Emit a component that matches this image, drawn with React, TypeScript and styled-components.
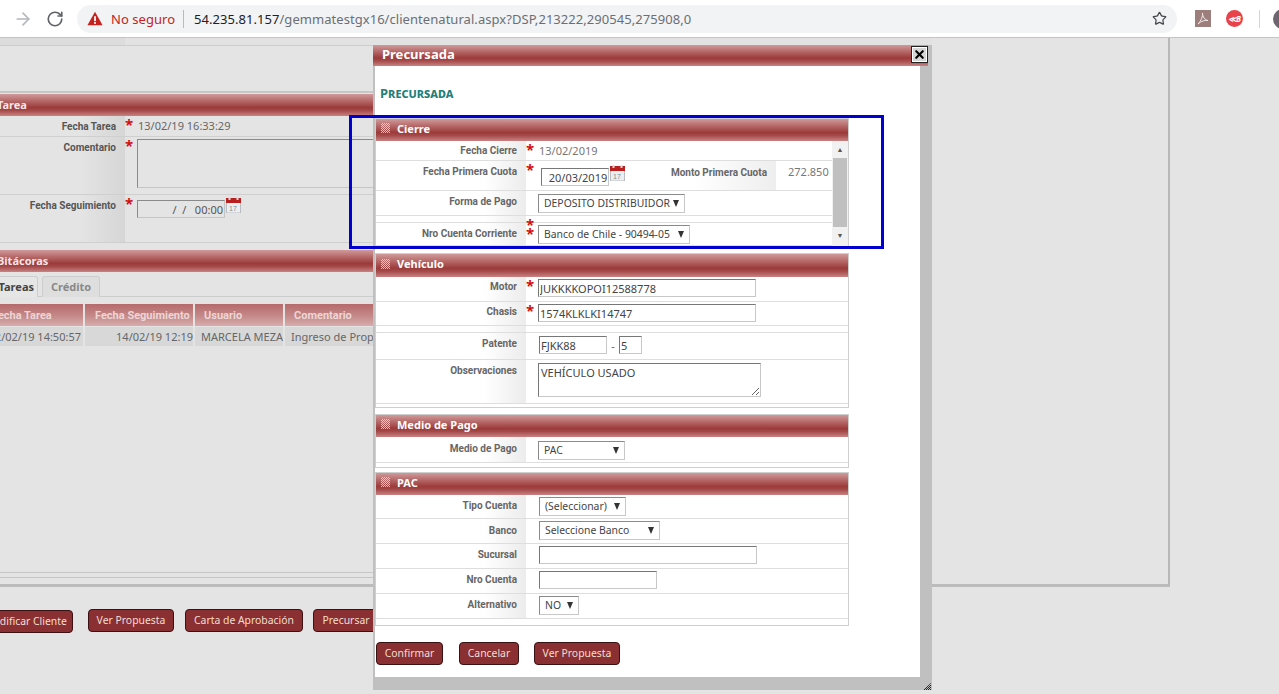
import React from "react";
import styled, { createGlobalStyle } from "styled-components";
import { ArrowRight, RotateCw, Star, X } from "lucide-react";

const GlobalStyle = createGlobalStyle`
  * { box-sizing: border-box; }
  html, body { margin: 0; height: 100%; overflow: hidden; background: #e4e4e4; }
  body { font-family: "Noto Sans", "Open Sans", sans-serif; font-size: 11px; color: #555; }
`;

const barGradient = "linear-gradient(#d09a9a 0%, #b76a6a 30%, #9c3a3a 62%, #a54a4a 75%, #c98282 100%)";

/* browser toolbar */
const Toolbar = styled.div`
  height: 38px;
  background: #fff;
  border-bottom: 1px solid #c4c4c4;
  display: flex;
  align-items: center;
  padding: 0 0 0 13px;
  overflow: hidden;
`;
const NavBack = styled(ArrowRight)`
  flex: none;
  color: #b4b7bb;
  margin-right: 13px;
`;
const NavReload = styled(RotateCw)`
  flex: none;
  color: #5f6368;
  margin-right: 13px;
`;
const Omnibox = styled.div`
  flex: none;
  width: 1100px;
  height: 28px;
  border-radius: 14px;
  background: #f1f3f4;
  display: flex;
  align-items: center;
  padding: 0 10px;
  font-size: 13px;
  letter-spacing: 0.05px;
  white-space: nowrap;
`;
const NotSecure = styled.span`
  width: 73px;
  height: 18px;
  margin: 0 10px 0 8px;
  border-right: 1px solid #b8babd;
  color: #c5221f;
  line-height: 18px;
`;
const UrlHost = styled.span`
  color: #202124;
`;
const UrlRest = styled.span`
  color: #6b6f74;
  flex: 1;
`;
const StarIcon = styled(Star)`
  color: #45484c;
`;
const Extensions = styled.div`
  flex: none;
  display: flex;
  align-items: center;
  margin-left: 18px;
`;
const PdfBadge = styled.svg`
  margin-right: 15px;
`;
const RedBadge = styled.span`
  width: 17px;
  height: 17px;
  border-radius: 50%;
  background: #e8424a;
  color: #fff;
  font-size: 8px;
  font-weight: 700;
  font-style: italic;
  text-align: center;
  line-height: 17px;
  margin-right: 16px;
`;
const ToolbarSep = styled.span`
  width: 1px;
  height: 18px;
  background: #d4d4d4;
  margin-right: 13px;
`;
const Avatar = styled.span`
  flex: none;
  width: 20px;
  height: 20px;
  border-radius: 50%;
  background: #6d6470;
`;

/* page behind the dialog */
const Page = styled.div`
  position: relative;
  height: 656px;
  overflow: hidden;
  background: #e4e4e4;
`;
const BackFrame = styled.div`
  margin-left: -25px;
  width: 1195px;
  height: 549px;
  border-right: 2px solid #b8b8b8;
  border-bottom: 3px solid #bcbcbc;
`;
const BackColumn = styled.div`
  width: 957px;
`;
const TopStrip = styled.div`
  height: 8px;
  border-bottom: 1px solid #cdcdcd;
  background: linear-gradient(90deg, #dcdcdc 0 150px, #e2e2e2 150px);
`;
const TopSpacer = styled.div`
  height: 47px;
  border-bottom: 2px solid #c6c6c6;
`;
const BackBar = styled.div`
  height: 22px;
  margin-top: 1px;
  padding-left: 22px;
  background: ${barGradient};
  color: #f6e6e6;
  font-weight: 700;
  font-size: 11px;
  line-height: 21px;
`;
const BackRow = styled.div<{ $h: number }>`
  height: ${(p) => p.$h}px;
  display: grid;
  grid-template-columns: 150px 1fr;
  border-bottom: 1px solid #cfcfcf;
`;
const BackLabel = styled.div`
  background: linear-gradient(90deg, #e4e4e4 70%, #d6d6d6);
  text-align: right;
  padding: 5px 9px 0 0;
  font-family: Roboto, sans-serif;
  font-weight: 700;
  font-size: 10px;
  color: #555;
`;
const BackValue = styled.div`
  display: flex;
  padding-top: 2px;
  color: #666;
`;
const Req = styled.span<{ $top?: number }>`
  flex: none;
  width: 12px;
  color: #d01010;
  font-size: 15px;
  font-weight: 700;
  line-height: 12px;
  margin-top: ${(p) => p.$top ?? 0}px;
`;
const PlainText = styled.span`
  margin-left: 1px;
`;
const BackTextarea = styled.div`
  width: 600px;
  height: 49px;
  border: 1px solid #8a8a8a;
  border-right-color: #c4c4c4;
  border-bottom-color: #c4c4c4;
`;
const BackDate = styled.div`
  width: 88px;
  height: 18px;
  margin-top: 3px;
  border: 1px solid #8a8a8a;
  border-right-color: #c4c4c4;
  border-bottom-color: #c4c4c4;
  text-align: right;
  line-height: 17px;
  padding-right: 1px;
  color: #555;
  white-space: pre;
`;
const BackGap = styled.div`
  height: 6px;
`;
const Tabs = styled.div`
  height: 25px;
  display: flex;
  gap: 4px;
  padding: 4px 0 0 3px;
  border-bottom: 1px solid #cdcdcd;
`;
const Tab = styled.div<{ $active?: boolean }>`
  width: ${(p) => (p.$active ? 60 : 58)}px;
  height: 21px;
  border: 1px solid #cdcdcd;
  border-bottom: 0;
  border-radius: 3px 3px 0 0;
  text-align: ${(p) => (p.$active ? "right" : "center")};
  padding-right: ${(p) => (p.$active ? 3 : 0)}px;
  font-weight: 700;
  line-height: 19px;
  color: ${(p) => (p.$active ? "#444" : "#888")};
  background: ${(p) => (p.$active ? "#e6e6e6" : "#dedede")};
`;
const LogGrid = styled.div`
  display: grid;
  grid-template-columns: 108px 108px 88px 1fr;
  column-gap: 2px;
  row-gap: 1px;
  margin-top: 7px;
`;
const LogHead = styled.div<{ $pad: number }>`
  height: 22px;
  padding-left: ${(p) => p.$pad}px;
  background: linear-gradient(#b56a6a, #c58a8a 55%, #d6adad);
  color: #edd6d6;
  font-family: Roboto, sans-serif;
  font-weight: 700;
  font-size: 11px;
  line-height: 23px;
  white-space: nowrap;
`;
const LogCell = styled.div<{ $end?: number; $pad?: number }>`
  height: 19px;
  background: #d8d8d8;
  color: #666;
  line-height: 20px;
  white-space: nowrap;
  text-align: ${(p) => (p.$end !== undefined ? "right" : "left")};
  padding: 0 ${(p) => p.$end ?? 0}px 0 ${(p) => p.$pad ?? 0}px;
`;
const BackLines = styled.div`
  margin-top: 226px;
  height: 6px;
  border-top: 1px solid #c6c6c6;
  border-bottom: 1px solid #c6c6c6;
`;
const BackActions = styled.div`
  display: flex;
  align-items: flex-start;
  padding: 22px 0 0 3px;
`;
const Action = styled.button<{ $w: number; $left?: number; $top?: number }>`
  flex: none;
  width: ${(p) => p.$w}px;
  height: 23px;
  margin-left: ${(p) => p.$left ?? 0}px;
  margin-top: ${(p) => p.$top ?? 0}px;
  padding: 0;
  background: #8a3033;
  border: 1px solid #3a1214;
  border-radius: 4px;
  color: #f3dfd0;
  font: 10.4px "Noto Sans", sans-serif;
  line-height: 19px;
`;

/* dialog */
const Modal = styled.div`
  position: absolute;
  left: 373px;
  top: 7px;
  width: 559px;
  height: 645px;
  background: #c0c0c0;
`;
const ModalBar = styled.div`
  width: 555px;
  height: 21px;
  padding-left: 9px;
  background: ${barGradient};
  color: #fff;
  font-size: 13px;
  font-weight: 700;
  line-height: 18px;
`;
const CloseBox = styled.div`
  position: absolute;
  left: 538px;
  top: 1px;
  width: 17px;
  height: 17px;
  display: flex;
  align-items: center;
  justify-content: center;
  background: #d6d6d6;
  border: 1px solid #222;
  outline: 1px solid #fff;
  outline-offset: -2px;
  color: #000;
`;
const ModalBody = styled.div`
  width: 545px;
  height: 611px;
  margin-left: 2px;
  background: #fff;
`;
const Heading = styled.div`
  height: 52px;
  padding: 18px 0 0 5px;
  color: #1f7f7b;
  font-size: 13px;
  font-weight: 700;
  font-variant: small-caps;
`;
const Panel = styled.section<{ $gap?: number }>`
  width: 474px;
  margin-top: ${(p) => p.$gap ?? 0}px;
  border: 1px solid #cfcfcf;
  background: #fff;
`;
const PanelBar = styled.div<{ $h?: number }>`
  height: ${(p) => p.$h ?? 22}px;
  display: flex;
  align-items: center;
  gap: 7px;
  padding: 0 0 4px 5px;
  background: ${barGradient};
  color: #fff;
  font-weight: 700;
  font-size: 11px;
`;
const Grip = styled.span`
  width: 9px;
  height: 10px;
  background: repeating-conic-gradient(#e2c4c4 0 25%, transparent 0 50%) 0 0 / 2px 2px;
`;
const PanelFoot = styled.div<{ $h: number }>`
  height: ${(p) => p.$h}px;
`;
const ScrollArea = styled.div`
  display: grid;
  grid-template-columns: 456px 16px;
`;
const ScrollTrack = styled.div`
  display: flex;
  flex-direction: column;
  align-items: center;
  background: #f1f1f1;
  color: #555;
  font-size: 7px;
  line-height: 17px;
`;
const ScrollThumb = styled.div`
  width: 14px;
  height: 69px;
  background: #c0c0c0;
`;
const ScrollArrow = styled.div`
  height: 17px;
`;
const Row = styled.div<{ $h: number }>`
  height: ${(p) => p.$h}px;
  display: grid;
  grid-template-columns: 150px 1fr;
  border-bottom: 1px solid #dedede;
`;
const Label = styled.div<{ $top?: number }>`
  background: linear-gradient(90deg, #fff 72%, #ececec);
  text-align: right;
  padding: ${(p) => p.$top ?? 5}px 9px 0 0;
  font-family: Roboto, sans-serif;
  font-weight: 700;
  font-size: 10px;
  color: #666;
`;
const Value = styled.div<{ $top?: number }>`
  display: flex;
  align-items: flex-start;
  padding-top: ${(p) => p.$top ?? 2}px;
  color: #777;
  line-height: 15px;
`;
const Field = styled.input<{ $w: number; $left?: number; $top?: number }>`
  width: ${(p) => p.$w}px;
  height: 18px;
  margin: ${(p) => p.$top ?? 0}px 0 0 ${(p) => p.$left ?? 0}px;
  padding: 0 1px;
  border: 1px solid #777;
  border-right-color: #c8c8c8;
  border-bottom-color: #c8c8c8;
  font: 11px "Noto Sans", sans-serif;
  color: #444;
  outline: none;
  background: #fff;
`;
const NoteArea = styled.textarea`
  width: 223px;
  height: 34px;
  margin: 1px 0 0 12px;
  padding: 1px 2px;
  border: 1px solid #777;
  border-right-color: #c8c8c8;
  border-bottom-color: #c8c8c8;
  font: 11px "Noto Sans", sans-serif;
  color: #444;
  outline: none;
`;
const Picker = styled.div<{ $w: number; $left?: number }>`
  width: ${(p) => p.$w}px;
  height: 19px;
  margin-left: ${(p) => p.$left ?? 0}px;
  display: flex;
  align-items: center;
  justify-content: space-between;
  padding: 0 5px;
  border: 1px solid #c8c8c8;
  border-top-color: #8a8a8a;
  border-left-color: #8a8a8a;
  font-size: 10.4px;
  color: #444;
  white-space: nowrap;
  &::after {
    content: "";
    border-left: 3.5px solid transparent;
    border-right: 3.5px solid transparent;
    border-top: 7px solid #333;
  }
`;
const Dash = styled.span`
  width: 12px;
  margin: 2px 0 0;
  text-align: center;
  color: #666;
`;
const StackedReq = styled.span`
  flex: none;
  width: 12px;
  height: 0;
  display: flex;
  flex-direction: column;
  margin-top: -7px;
`;
const Monto = styled.div`
  display: grid;
  grid-template-columns: 136px 1fr;
  margin-left: 15px;
  height: 29px;
  margin-top: -2px;
  flex: 1;
`;
const MontoLabel = styled.div`
  background: linear-gradient(90deg, #fff 40%, #eeeeee);
  text-align: right;
  padding: 4px 9px 0 0;
  font-family: Roboto, sans-serif;
  font-weight: 700;
  font-size: 10px;
  color: #666;
  white-space: nowrap;
`;
const MontoValue = styled.div`
  padding: 3px 0 0 12px;
  color: #777;
`;
const CalendarSvg = styled.svg<{ $top: number }>`
  flex: none;
  margin: ${(p) => p.$top}px 0 0 1px;
`;
const ModalActions = styled.div`
  display: flex;
  margin-top: 16px;
  padding-left: 1px;
`;
const ResizeGrip = styled.span`
  position: absolute;
  right: 1px;
  bottom: 0;
  width: 8px;
  height: 7px;
  background: repeating-conic-gradient(#222 0 25%, transparent 0 50%) 0 0 / 2px 2px;
  clip-path: polygon(100% 0, 100% 100%, 0 100%);
`;
/* annotation someone drew on the capture */
const Highlight = styled.div`
  position: absolute;
  left: 349px;
  top: 77px;
  width: 535px;
  height: 134px;
  border: 3px solid #0000d0;
  pointer-events: none;
`;

const Calendar: React.FC<{ top: number }> = ({ top }) => (
  <CalendarSvg $top={top} width="15" height="16" viewBox="0 0 15 16">
    <rect x="0.5" y="2" width="14" height="14" fill="#eceff2" stroke="#b9bcc0" />
    <rect x="0" y="1" width="15" height="5" fill="#b8201f" />
    <rect x="2.5" y="0" width="2" height="3" fill="#ddd" />
    <rect x="10.5" y="0" width="2" height="3" fill="#ddd" />
    <text x="3" y="14" fontSize="7" fill="#888" fontFamily="Liberation Sans">17</text>
  </CalendarSvg>
);

const App: React.FC = () => (
  <>
    <GlobalStyle />
    <Toolbar>
      <NavBack size={20} strokeWidth={2} />
      <NavReload size={18} strokeWidth={2.2} />
      <Omnibox>
        <svg width="16" height="15" viewBox="0 0 18 16">
          <path d="M9 0.5 L17.5 15.5 H0.5 Z" fill="#c5221f" />
          <rect x="8" y="5.5" width="2" height="5.5" fill="#fff" />
          <rect x="8" y="12" width="2" height="2" fill="#fff" />
        </svg>
        <NotSecure>No seguro</NotSecure>
        <UrlHost>54.235.81.157</UrlHost>
        <UrlRest>/gemmatestgx16/clientenatural.aspx?DSP,213222,290545,275908,0</UrlRest>
        <StarIcon size={15} strokeWidth={2} />
      </Omnibox>
      <Extensions>
        <PdfBadge width="16" height="17" viewBox="0 0 16 17">
          <rect width="16" height="17" fill="#9c7f7d" />
          <path d="M3 14 C6 11 8 6 7.5 3 C7.5 7 10 10 13 10.5 C10 10 6 11 3 14 Z" fill="none" stroke="#f2e8e8" strokeWidth="1" />
        </PdfBadge>
        <RedBadge>≪B</RedBadge>
        <ToolbarSep />
        <Avatar />
      </Extensions>
    </Toolbar>

    <Page>
      <BackFrame>
        <BackColumn>
          <TopStrip />
          <TopSpacer />
          <BackBar>Tarea</BackBar>
          <BackRow $h={21}>
            <BackLabel>Fecha Tarea</BackLabel>
            <BackValue>
              <Req>*</Req>
              <PlainText>13/02/19 16:33:29</PlainText>
            </BackValue>
          </BackRow>
          <BackRow $h={58}>
            <BackLabel>Comentario</BackLabel>
            <BackValue>
              <Req>*</Req>
              <BackTextarea />
            </BackValue>
          </BackRow>
          <BackRow $h={48}>
            <BackLabel>Fecha Seguimiento</BackLabel>
            <BackValue>
              <Req>*</Req>
              <BackDate>{"/  /   00:00"}</BackDate>
              <Calendar top={0} />
            </BackValue>
          </BackRow>
          <BackGap />
          <BackBar>Bitácoras</BackBar>
          <Tabs>
            <Tab $active>Tareas</Tab>
            <Tab>Crédito</Tab>
          </Tabs>
          <LogGrid>
            <LogHead $pad={17}>Fecha Tarea</LogHead>
            <LogHead $pad={10}>Fecha Seguimiento</LogHead>
            <LogHead $pad={9}>Usuario</LogHead>
            <LogHead $pad={9}>Comentario</LogHead>
            <LogCell $end={2}>12/02/19 14:50:57</LogCell>
            <LogCell $end={0}>14/02/19 12:19</LogCell>
            <LogCell $pad={6}>MARCELA MEZA</LogCell>
            <LogCell $pad={6}>Ingreso de Propuesta</LogCell>
          </LogGrid>
          <BackLines />
        </BackColumn>
      </BackFrame>
      <BackActions>
        <Action $w={95} $top={1} $left={-25}>Modificar Cliente</Action>
        <Action $w={86} $left={15}>Ver Propuesta</Action>
        <Action $w={118} $left={11}>Carta de Aprobación</Action>
        <Action $w={66} $left={10}>Precursar</Action>
      </BackActions>

      <Modal>
        <ModalBar>Precursada</ModalBar>
        <CloseBox>
          <X size={13} strokeWidth={4} />
        </CloseBox>
        <ModalBody>
          <Heading>Precursada</Heading>

          <Panel>
            <PanelBar>
              <Grip />
              Cierre
            </PanelBar>
            <ScrollArea>
              <div>
                <Row $h={20}>
                  <Label $top={4}>Fecha Cierre</Label>
                  <Value>
                    <Req>*</Req>
                    <PlainText>13/02/2019</PlainText>
                  </Value>
                </Row>
                <Row $h={30}>
                  <Label>Fecha Primera Cuota</Label>
                  <Value>
                    <Req>*</Req>
                    <Field $w={68} $left={3} $top={5} defaultValue="  20/03/2019" readOnly />
                    <Calendar top={2} />
                    <Monto>
                      <MontoLabel>Monto Primera Cuota</MontoLabel>
                      <MontoValue>272.850</MontoValue>
                    </Monto>
                  </Value>
                </Row>
                <Row $h={25}>
                  <Label>Forma de Pago</Label>
                  <Value $top={3}>
                    <Picker $w={147} $left={12}>DEPOSITO DISTRIBUIDOR</Picker>
                  </Value>
                </Row>
                <Row $h={7}>
                  <Label />
                  <Value />
                </Row>
                <Row $h={23}>
                  <Label>Nro Cuenta Corriente</Label>
                  <Value>
                    <StackedReq>
                      <Req>*</Req>
                      <Req $top={-3}>*</Req>
                    </StackedReq>
                    <Picker $w={152}>Banco de Chile - 90494-05</Picker>
                  </Value>
                </Row>
              </div>
              <ScrollTrack>
                <ScrollArrow>▲</ScrollArrow>
                <ScrollThumb />
                <ScrollArrow>▼</ScrollArrow>
              </ScrollTrack>
            </ScrollArea>
          </Panel>

          <Panel $gap={6}>
            <PanelBar $h={23}>
              <Grip />
              Vehículo
            </PanelBar>
            <Row $h={25}>
              <Label $top={4}>Motor</Label>
              <Value>
                <Req>*</Req>
                <Field $w={218} defaultValue="JUKKKKOPOI12588778" readOnly />
              </Value>
            </Row>
            <Row $h={24}>
              <Label $top={4}>Chasis</Label>
              <Value>
                <Req>*</Req>
                <Field $w={218} defaultValue="1574KLKLKI14747" readOnly />
              </Value>
            </Row>
            <Row $h={7}>
              <Label />
              <Value />
            </Row>
            <Row $h={27}>
              <Label>Patente</Label>
              <Value $top={3}>
                <Field $w={68} $left={13} defaultValue="FJKK88" readOnly />
                <Dash>-</Dash>
                <Field $w={23} defaultValue="5" readOnly />
              </Value>
            </Row>
            <Row $h={44}>
              <Label>Observaciones</Label>
              <Value>
                <NoteArea defaultValue="VEHÍCULO USADO" readOnly />
              </Value>
            </Row>
            <PanelFoot $h={3} />
          </Panel>

          <Panel $gap={6}>
            <PanelBar>
              <Grip />
              Medio de Pago
            </PanelBar>
            <Row $h={26}>
              <Label $top={6}>Medio de Pago</Label>
              <Value $top={4}>
                <Picker $w={87} $left={12}>PAC</Picker>
              </Value>
            </Row>
            <PanelFoot $h={4} />
          </Panel>

          <Panel $gap={4}>
            <PanelBar>
              <Grip />
              PAC
            </PanelBar>
            <Row $h={24}>
              <Label>Tipo Cuenta</Label>
              <Value>
                <Picker $w={87} $left={13}>(Seleccionar)</Picker>
              </Value>
            </Row>
            <Row $h={25}>
              <Label $top={6}>Banco</Label>
              <Value>
                <Picker $w={121} $left={13}>Seleccione Banco</Picker>
              </Value>
            </Row>
            <Row $h={25}>
              <Label>Sucursal</Label>
              <Value>
                <Field $w={218} $left={13} readOnly />
              </Value>
            </Row>
            <Row $h={25}>
              <Label>Nro Cuenta</Label>
              <Value>
                <Field $w={118} $left={13} readOnly />
              </Value>
            </Row>
            <Row $h={25}>
              <Label>Alternativo</Label>
              <Value>
                <Picker $w={40} $left={13}>NO</Picker>
              </Value>
            </Row>
            <PanelFoot $h={6} />
          </Panel>

          <ModalActions>
            <Action $w={67}>Confirmar</Action>
            <Action $w={60} $left={16}>Cancelar</Action>
            <Action $w={86} $left={15}>Ver Propuesta</Action>
          </ModalActions>
        </ModalBody>
        <ResizeGrip />
      </Modal>
      <Highlight />
    </Page>
  </>
);

export default App;
